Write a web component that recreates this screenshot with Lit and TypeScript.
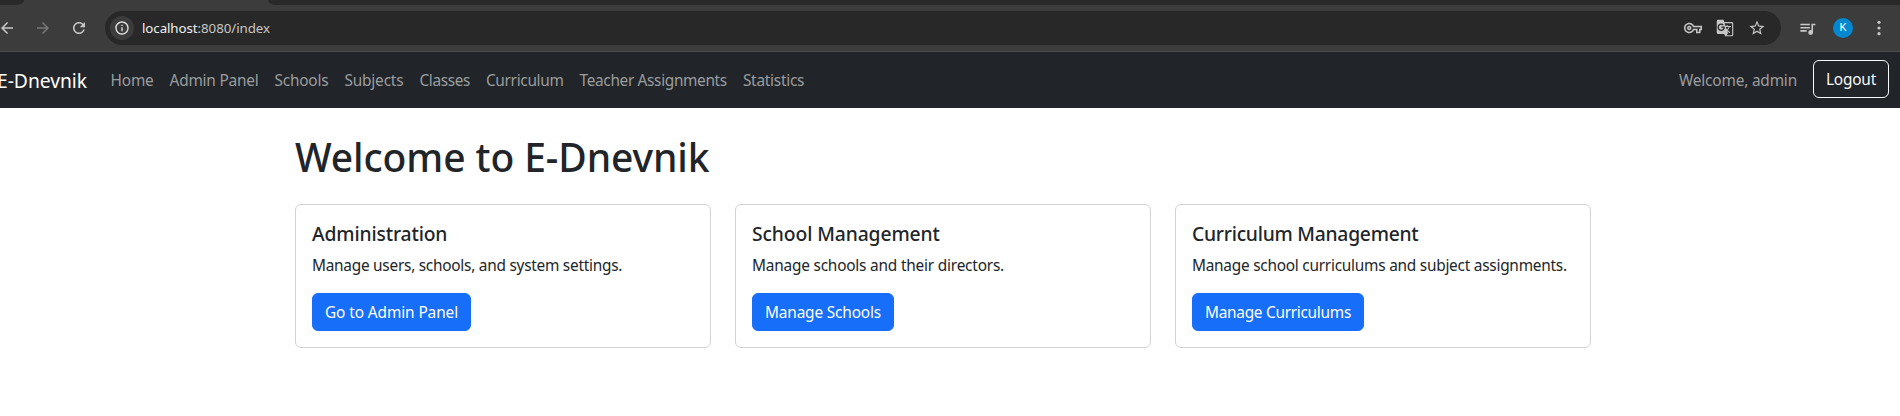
import { LitElement, html, css } from "lit";
import { customElement } from "lit/decorators.js";
import { styleMap } from "lit/directives/style-map.js";

const FAMILY = '"Noto Sans", "Open Sans", sans-serif';
const pen = document.createElement("canvas").getContext("2d")!;

/** Text set to a given advance width by tracking. */
const fit = (text: string, width: number, size = 15.4, weight = 400) => {
  pen.font = `${weight} ${size}px ${FAMILY}`;
  const spacing = (width - pen.measureText(text).width) / text.length;
  return html`<span style=${styleMap({ letterSpacing: `${spacing.toFixed(3)}px` })}>${text}</span>`;
};

const icon = (d: string, size = 18) =>
  html`<svg width=${size} height=${size} viewBox="0 0 24 24" fill="currentColor"><path d=${d} /></svg>`;

const BACK = "M20 11H7.83l5.59-5.59L12 4l-8 8 8 8 1.41-1.41L7.83 13H20v-2z";
const FORWARD = "M12 4l-1.41 1.41L16.17 11H4v2h12.17l-5.58 5.59L12 20l8-8z";
const RELOAD = "M17.65 6.35C16.2 4.9 14.21 4 12 4c-4.42 0-7.99 3.58-7.99 8s3.57 8 7.99 8c3.73 0 6.84-2.55 7.73-6h-2.08c-.82 2.33-3.04 4-5.65 4-3.31 0-6-2.69-6-6s2.69-6 6-6c1.66 0 3.14.69 4.22 1.78L13 11h7V4l-2.35 2.35z";
const INFO = "M11 7h2v2h-2zm0 4h2v6h-2zm1-9C6.48 2 2 6.48 2 12s4.48 10 10 10 10-4.48 10-10S17.52 2 12 2zm0 18c-4.41 0-8-3.59-8-8s3.59-8 8-8 8 3.59 8 8-3.59 8-8 8z";
const KEY = "M22 19h-6v-4h-2.68c-1.14 2.42-3.6 4-6.32 4-3.86 0-7-3.14-7-7s3.14-7 7-7c2.72 0 5.17 1.58 6.32 4H24v6h-2v4zm-4-2h2v-4h2v-2H11.94l-.23-.67C11.01 8.34 9.11 7 7 7c-2.76 0-5 2.24-5 5s2.24 5 5 5c2.11 0 4.01-1.34 4.71-3.33l.23-.67H18v4zM7 15c-1.65 0-3-1.35-3-3s1.35-3 3-3 3 1.35 3 3-1.35 3-3 3zm0-4c-.55 0-1 .45-1 1s.45 1 1 1 1-.45 1-1-.45-1-1-1z";
const TRANSLATE = "M21 4H11l-1-3H3c-1.1 0-2 .9-2 2v15c0 1.1.9 2 2 2h8l1 3h9c1.1 0 2-.9 2-2V6c0-1.1-.9-2-2-2zM7 16c-2.76 0-5-2.24-5-5s2.24-5 5-5c1.35 0 2.48.5 3.35 1.3L9.03 8.57c-.38-.36-1.04-.78-2.03-.78-1.74 0-3.15 1.44-3.15 3.21S5.26 14.21 7 14.21c2.01 0 2.84-1.44 2.92-2.41H7v-1.71h4.68c.07.31.12.61.12 1.02C11.8 13.97 9.89 16 7 16zm6.17-5.42h3.7c-.43 1.25-1.11 2.43-2.05 3.47-.31-.35-.6-.72-.86-1.1l-.79-2.37zm8.33 9.92c0 .55-.45 1-1 1H14l2-2.5-1.04-3.1 3.1 3.1.92-.92-3.3-3.25.02-.02c1.13-1.25 1.93-2.69 2.4-4.22H20v-1.3h-4.53V8h-1.29v1.29h-1.44L11.46 5.5h9.04c.55 0 1 .45 1 1v14z";
const STAR = "M22 9.24l-7.19-.62L12 2 9.19 8.63 2 9.24l5.46 4.73L5.82 21 12 17.27 18.18 21l-1.63-7.03L22 9.24zM12 15.4l-3.76 2.27 1-4.28-3.32-2.88 4.38-.38L12 6.1l1.71 4.04 4.38.38-3.32 2.88 1 4.28L12 15.4z";
const QUEUE = "M15 6H3v2h12V6zm0 4H3v2h12v-2zM3 16h8v-2H3v2zM17 6v8.18c-.31-.11-.65-.18-1-.18-1.66 0-3 1.34-3 3s1.34 3 3 3 3-1.34 3-3V8h3V6h-5z";

@customElement("browser-bar")
class BrowserBar extends LitElement {
  static styles = css`
    :host { display: block; height: 52px; box-sizing: border-box; background: #3c3c3c; border-bottom: 1px solid #494b4c; color: #c7c7c7; overflow: hidden; }
    svg { display: block; flex: none; }
    .tabs { display: flex; height: 5px; background: #3c3c3c; }
    .edge { width: 24px; background: #292929; border-bottom-right-radius: 8px 5px; }
    .gap { width: 244px; }
    .rest { flex: 1; background: #292929; border-bottom-left-radius: 8px 5px; }
    .bar { display: flex; align-items: center; height: 46px; }
    .nav { display: flex; gap: 18px; width: 107px; margin-left: -2px; flex: none; }
    .off { color: #777; }
    .box { display: flex; align-items: center; flex: none; width: 1676px; height: 34px; box-sizing: border-box; padding: 0 15px 0 5px; border-radius: 17px; background: #282828; }
    .info { display: flex; align-items: center; justify-content: center; width: 24px; height: 24px; border-radius: 50%; background: #3c3c3c; color: #e3e3e3; }
    .url { flex: 1; padding: 0 0 1px 8px; color: #c7c7c7; line-height: 18px; white-space: nowrap; font-family: "Noto Sans", "Open Sans", sans-serif; font-size: 13.3px; }
    .host { color: #f0f0f0; }
    .tools { display: flex; align-items: center; gap: 14px; }
    .side { display: flex; align-items: center; padding-left: 17px; }
    .me { width: 20px; height: 20px; margin: 0 24px 0 16px; border-radius: 50%; background: #0288d1; color: #fff; font: 11px/20px Roboto, sans-serif; text-align: center; }
  `;
  render() {
    return html`
      <div class="tabs"><div class="edge"></div><div class="gap"></div><div class="rest"></div></div>
      <div class="bar">
        <div class="nav">${icon(BACK)}<span class="off">${icon(FORWARD)}</span>${icon(RELOAD)}</div>
        <div class="box">
          <div class="info">${icon(INFO, 16)}</div>
          <div class="url"><span class="host">${fit("localhost", 55.5, 13.3)}</span>${fit(":8080/index", 72.5, 13.3)}</div>
          <div class="tools">${icon(KEY)}${icon(TRANSLATE)}${icon(STAR)}</div>
        </div>
        <div class="side">
          ${icon(QUEUE, 19)}
          <div class="me">K</div>
          <svg width="4" height="16" viewBox="0 0 4 16" fill="currentColor"><circle cx="2" cy="2.3" r="1.6" /><circle cx="2" cy="8" r="1.6" /><circle cx="2" cy="13.7" r="1.6" /></svg>
        </div>
      </div>`;
  }
}

const LINKS: [string, number][] = [
  ["Home", 42.9], ["Admin Panel", 88.9], ["Schools", 54], ["Subjects", 59],
  ["Classes", 50.5], ["Curriculum", 77.6], ["Teacher Assignments", 147.3], ["Statistics", 61.3],
];

const CARDS: { title: [string, number]; text: [string, number]; action: [string, number] }[] = [
  { title: ["Administration", 135.3], text: ["Manage users, schools, and system settings.", 310.2], action: ["Go to Admin Panel", 133] },
  { title: ["School Management", 187.8], text: ["Manage schools and their directors.", 252], action: ["Manage Schools", 116] },
  { title: ["Curriculum Management", 226.5], text: ["Manage school curriculums and subject assignments.", 374.8], action: ["Manage Curriculums", 146] },
];

@customElement("app-root")
class AppRoot extends LitElement {
  static styles = css`
    :host { display: block; height: 416px; overflow: hidden; background: #fff; color: #212529; font: 15.4px/26px "Noto Sans", "Open Sans", sans-serif; white-space: nowrap; }
    .navbar { display: flex; height: 56px; box-sizing: border-box; padding: 8px 11px 8px 0; background: #212529; color: #9b9d9f; }
    .brand { margin: 0 15.6px 0 -3px; font-size: 19.3px; line-height: 42px; color: #fff; }
    .links { display: flex; flex: 1; }
    .link { padding: 8px; }
    .user { padding: 8px 16px 8px 0; }
    .btn { display: inline-block; height: 38px; box-sizing: border-box; padding: 6px 12px; border: 1px solid #176ef8; border-radius: 6px; background: #176ef8; color: #fff; }
    .outline { border-color: #f8f9fa; background: none; color: #f8f9fa; }
    .page { width: 1296px; padding: 24px 0 0 295px; }
    h1 { height: 48px; margin: 0; font-size: 39px; font-weight: 500; line-height: 50px; }
    .cards { display: grid; grid-template-columns: repeat(3, 1fr); gap: 24px; margin-top: 24px; }
    .card { height: 144px; box-sizing: border-box; padding: 16px; border: 1px solid #d3d3d4; border-radius: 6px; }
    h5 { height: 24px; margin: 0 0 8px; font-size: 19.3px; font-weight: 500; line-height: 26px; }
    p { height: 24px; margin: 0 0 16px; }
    .card .btn { display: block; width: max-content; }
  `;
  render() {
    return html`
      <browser-bar></browser-bar>
      <nav class="navbar">
        <div class="brand">${fit("E-Dnevnik", 90, 19.3)}</div>
        <div class="links">${LINKS.map(([t, w]) => html`<div class="link">${fit(t, w)}</div>`)}</div>
        <div class="user">${fit("Welcome, admin", 118)}</div>
        <div class="btn outline">${fit("Logout", 50)}</div>
      </nav>
      <main class="page">
        <h1>${fit("Welcome to E-Dnevnik", 414.5, 39, 500)}</h1>
        <div class="cards">
          ${CARDS.map((c) => html`<section class="card">
            <h5>${fit(c.title[0], c.title[1], 19.3, 500)}</h5>
            <p>${fit(c.text[0], c.text[1])}</p>
            <div class="btn">${fit(c.action[0], c.action[1])}</div>
          </section>`)}
        </div>
      </main>`;
  }
}
